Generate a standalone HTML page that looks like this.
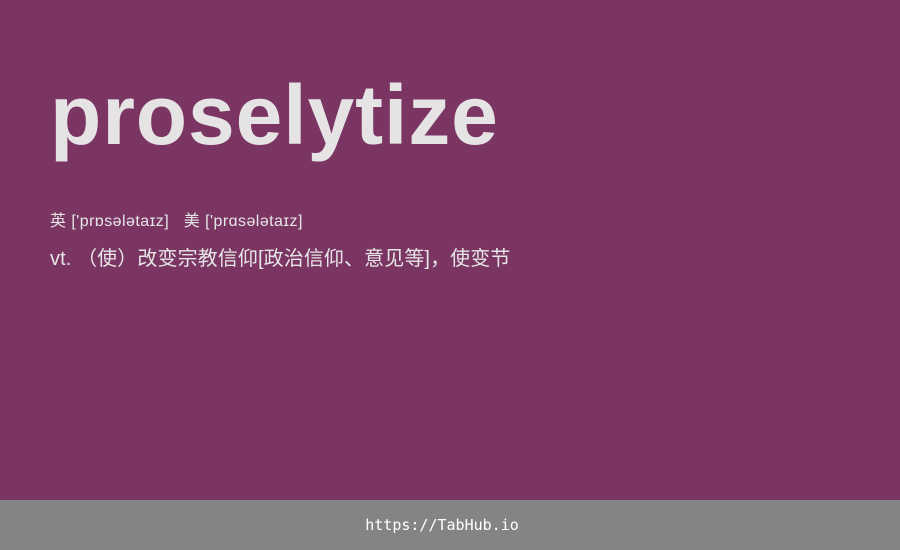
<!DOCTYPE html>
<html><head><meta charset="utf-8"><style>
body{margin:0;width:900px;height:550px;background:#7b3563;position:relative;overflow:hidden;font-family:"Liberation Sans","Noto Sans CJK SC",sans-serif;color:#e6e6e6}
h1{position:absolute;left:50px;top:65px;margin:0;font-size:84px;font-weight:bold;line-height:100px;letter-spacing:0.9px;color:#e5e3e4}
.ph{position:absolute;left:50px;top:212px;font-size:16px;line-height:20px;letter-spacing:0.45px}
.def{position:absolute;left:50px;top:247px;font-size:20px;line-height:24px;letter-spacing:0.1px}
.foot{position:absolute;left:0;top:500px;width:900px;height:50px;background:#848484;color:#fff;font-family:"DejaVu Sans Mono",monospace;font-size:15px;text-align:center;line-height:50px;text-indent:-16px}
</style></head><body>
<h1>proselytize</h1>
<div class="ph">英 ['prɒsələtaɪz]&nbsp;&nbsp;&nbsp;美 ['prɑsələtaɪz]</div>
<div class="def">vt. （使）改变宗教信仰[政治信仰、意见等]，使变节</div>
<div class="foot">https://TabHub.io</div>
</body></html>
